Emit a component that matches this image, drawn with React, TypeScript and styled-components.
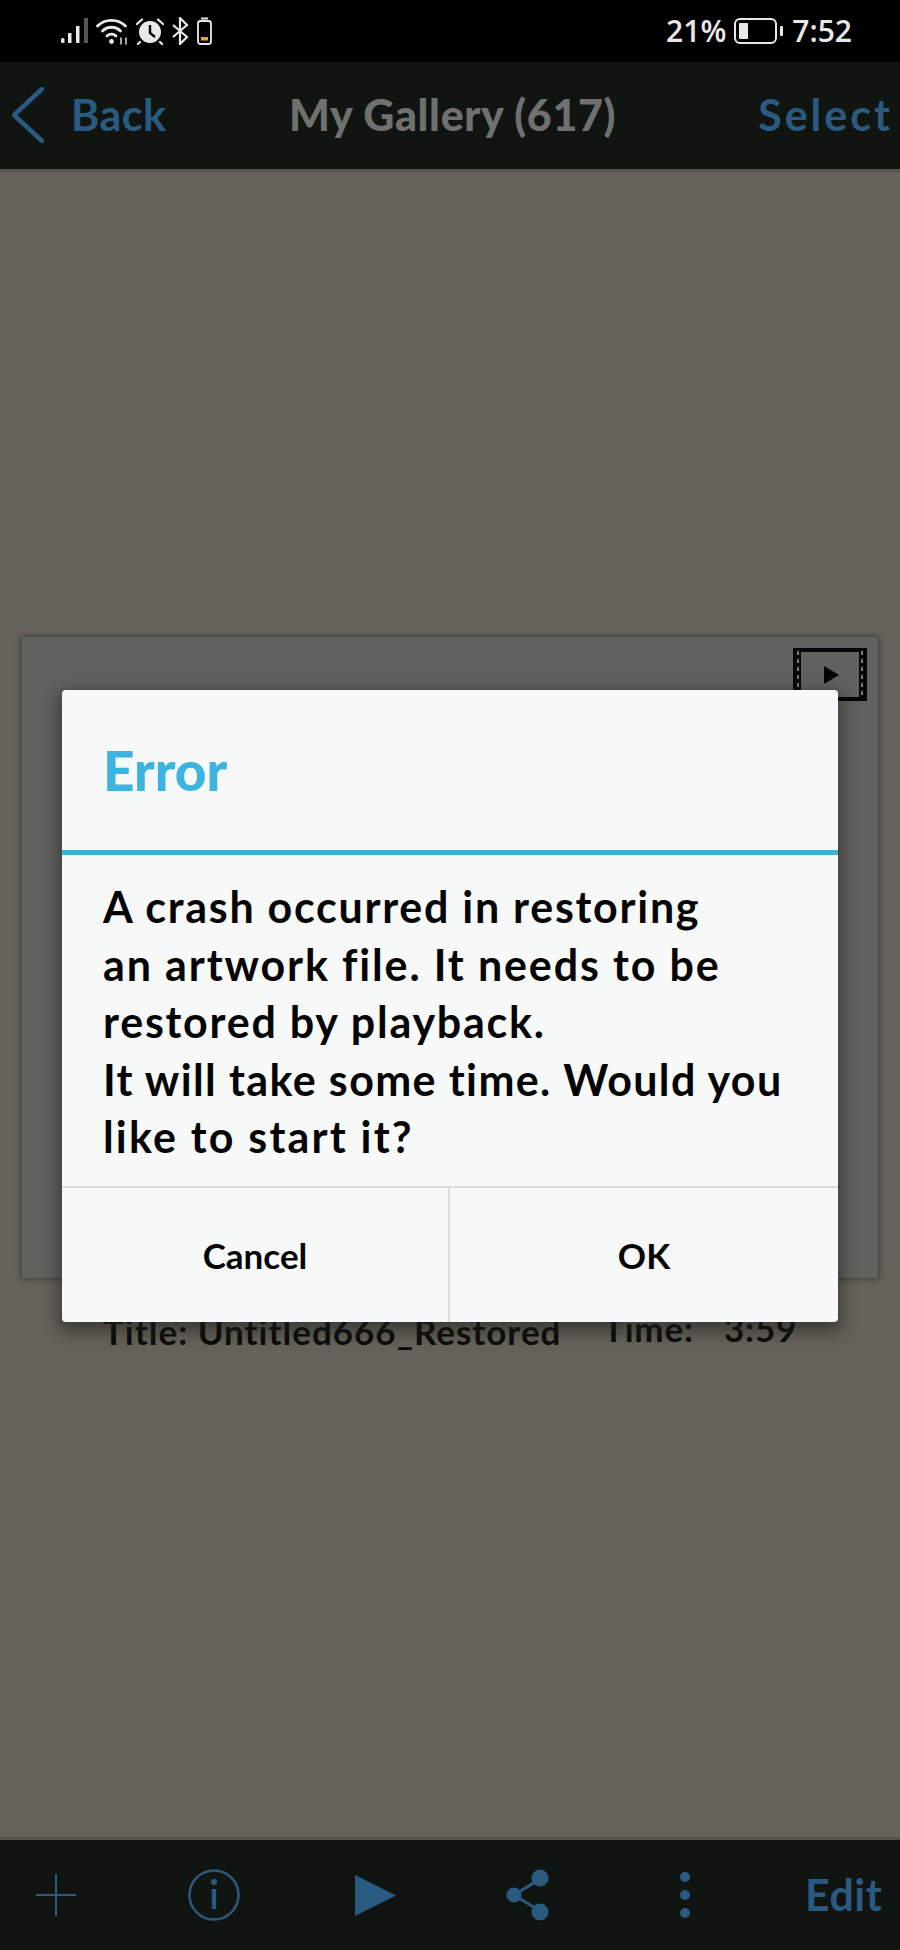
import React from "react";
import styled, { createGlobalStyle } from "styled-components";

const GlobalStyle = createGlobalStyle`
  html, body {
    margin: 0;
    padding: 0;
    background: #64625a;
    font-family: "Lato", "Noto Sans", sans-serif;
  }
`;

const Page = styled.div`
  width: 900px;
  height: 1950px;
  display: flex;
  flex-direction: column;
  overflow: hidden;
`;

const StatusBar = styled.div`
  height: 62px;
  flex: none;
  background: #000;
  display: flex;
  align-items: center;
  justify-content: space-between;
  padding: 0 48px 0 61px;
  box-sizing: border-box;
`;

const StatusGroup = styled.div`
  display: flex;
  align-items: center;
  gap: ${(p: { $gap: number }) => p.$gap}px;
`;

const StatusText = styled.span`
  font-family: "Open Sans", sans-serif;
  font-size: 30px;
  font-weight: 600;
  color: #e8e8e8;
  line-height: 32px;
`;

const TopBar = styled.div`
  height: 110px;
  flex: none;
  background: #111512;
  border-bottom: 3px solid #55554d;
  box-sizing: border-box;
  display: grid;
  grid-template-columns: 1fr auto 1fr;
  align-items: center;
  padding: 0 7px 2px 12px;
`;

const BackLink = styled.div`
  display: flex;
  align-items: center;
  gap: 27px;
`;

const BarLabel = styled.span<{ $spacing?: number }>`
  font-size: 43px;
  font-weight: 700;
  color: #2a5a80;
  letter-spacing: ${(p) => p.$spacing ?? 0.5}px;
  line-height: 50px;
`;

const BarTitle = styled.span`
  font-size: 43px;
  font-weight: 900;
  color: #6f716e;
  letter-spacing: 0.6px;
  line-height: 50px;
`;

const SelectLabel = styled(BarLabel)`
  justify-self: end;
`;

const Content = styled.div`
  flex: 1;
  position: relative;
  padding: 465px 22px 0;
  box-sizing: border-box;
`;

const Card = styled.div`
  height: 641px;
  background: #5f625d;
  box-shadow: 0 0 5px 1px #3a3a34;
  display: flex;
  justify-content: flex-end;
  align-items: flex-start;
  padding: 11px 11px 0 0;
  box-sizing: border-box;
`;

const Caption = styled.div`
  display: flex;
  align-items: flex-start;
  font-weight: 700;
  font-size: 35px;
  line-height: 42px;
  color: #0c0c0a;
  margin-top: 32px;
  padding-left: 81px;
`;

const CaptionTitle = styled.span`
  width: 500px;
  letter-spacing: 1px;
`;

const CaptionTime = styled.span<{ $width?: number }>`
  width: ${(p) => p.$width ?? 0}px;
  margin-top: -3px;
  letter-spacing: 0.8px;
`;

const Overlay = styled.div`
  position: absolute;
  inset: 0;
  display: flex;
  align-items: center;
  justify-content: center;
`;

const Dialog = styled.div`
  width: 776px;
  height: 632px;
  margin-top: 3px;
  background: #f7f8f8;
  border-radius: 4px;
  box-shadow: 0 6px 16px 4px rgba(30, 30, 26, 0.55);
  display: flex;
  flex-direction: column;
`;

const DialogHeader = styled.div`
  height: 165px;
  flex: none;
  display: flex;
  align-items: center;
  padding-left: 41px;
  box-sizing: border-box;
  border-bottom: 5px solid #3fb1d8;
`;

const DialogTitle = styled.h2`
  margin: 0;
  font-size: 55px;
  font-weight: 900;
  color: #3db4e0;
`;

const DialogBody = styled.div`
  flex: 1;
  padding: 23px 0 0 41px;
  box-sizing: border-box;
  font-size: 43px;
  font-weight: 700;
  line-height: 57.5px;
  color: #050505;
`;

const BodyLine = styled.div<{ $spacing: number }>`
  white-space: nowrap;
  letter-spacing: ${(p) => p.$spacing}px;
`;

const DialogFooter = styled.div`
  height: 136px;
  flex: none;
  display: grid;
  grid-template-columns: 388px 1fr;
  border-top: 2px solid #dcdcdc;
  box-sizing: border-box;
`;

const FooterButton = styled.div<{ $divider?: boolean }>`
  display: flex;
  align-items: center;
  justify-content: center;
  font-size: 35px;
  font-weight: 700;
  color: #050505;
  ${(p) => (p.$divider ? "border-right: 2px solid #dcdcdc;" : "")}
`;

const BottomBar = styled.div`
  height: 113px;
  flex: none;
  background: #111512;
  border-top: 3px solid #55554d;
  box-sizing: border-box;
  display: grid;
  grid-template-columns: 152px 167px 151px 174px 125px auto;
  align-items: center;
  justify-items: start;
  padding-left: 36px;
`;

const BLUE = "#2a5a80";

const Signal = () => (
  <svg width="27" height="26" viewBox="0 0 27 26">
    <rect x="0" y="20" width="3.5" height="5" rx="1.5" fill="#e8e8e8" />
    <rect x="7" y="15" width="3.5" height="10" fill="#e8e8e8" />
    <rect x="15" y="8" width="3.5" height="17" fill="#e8e8e8" />
    <rect x="23" y="0" width="4" height="25" fill="#555" />
  </svg>
);

const Wifi = () => (
  <svg width="32" height="27" viewBox="0 0 32 27" fill="none" stroke="#e8e8e8" strokeWidth="2.8" strokeLinecap="round">
    <path d="M1.5 8 C9 0.5 22 0.5 29.5 8" />
    <path d="M6.5 13 C11.5 8 19.5 8 24.5 13" />
    <path d="M11 18 C13.5 15.5 17.5 15.5 20 18" />
    <circle cx="15.5" cy="23.5" r="2.4" fill="#e8e8e8" stroke="none" />
    <path d="M25 20 V26 M30 20 V26" strokeWidth="1.4" />
  </svg>
);

const Alarm = () => (
  <svg width="28" height="27" viewBox="0 0 28 27">
    <circle cx="14" cy="14" r="11" fill="#e8e8e8" />
    <path d="M14 7 V15 L19 19" fill="none" stroke="#000" strokeWidth="2.4" />
    <path d="M1 6 L6 1.5 M27 6 L22 1.5 M4 24 L2 26 M24 24 L26 26" stroke="#e8e8e8" strokeWidth="2.2" strokeLinecap="round" />
  </svg>
);

const Bluetooth = () => (
  <svg width="17" height="28" viewBox="0 0 17 28" fill="none" stroke="#e8e8e8" strokeWidth="2.2">
    <path d="M1 8 L15 20 L8 27 V1 L15 8 L1 20" />
  </svg>
);

const SmallBattery = () => (
  <svg width="15" height="28" viewBox="0 0 15 28">
    <rect x="4" y="0.5" width="7" height="2" fill="#e8e8e8" />
    <rect x="1" y="4" width="13" height="23" rx="2.5" fill="none" stroke="#e8e8e8" strokeWidth="1.8" />
    <rect x="4" y="20" width="7" height="3.5" fill="#e8a33c" />
  </svg>
);

const BigBattery = () => (
  <svg width="50" height="26" viewBox="0 0 50 26">
    <rect x="1" y="1" width="41" height="24" rx="5" fill="none" stroke="#e8e8e8" strokeWidth="2" />
    <rect x="5" y="5" width="9" height="16" rx="1" fill="#e8e8e8" />
    <rect x="46" y="8" width="3" height="10" rx="1" fill="#e8e8e8" />
  </svg>
);

const Chevron = () => (
  <svg width="32" height="56" viewBox="0 0 32 56" fill="none" stroke={BLUE} strokeWidth="4.5" strokeLinecap="round" strokeLinejoin="round">
    <path d="M30 2 L2 28 L30 54" />
  </svg>
);

const FilmIcon = () => (
  <svg width="74" height="53" viewBox="0 0 74 53">
    <rect x="2" y="2" width="70" height="49" fill="none" stroke="#050505" strokeWidth="4" />
    <path d="M5 3 V51 M69 3 V51" stroke="#050505" strokeWidth="6" />
    <path d="M5 3 V51 M69 3 V51" stroke="#777" strokeWidth="2" strokeDasharray="4 4" />
    <path d="M31 18 L46 27 L31 36 Z" fill="#050505" />
  </svg>
);

const PlusIcon = () => (
  <svg width="40" height="42" viewBox="0 0 40 42" stroke={BLUE} strokeWidth="2">
    <path d="M20 0 V42 M0 21 H40" />
  </svg>
);

const InfoIcon = () => (
  <svg width="52" height="52" viewBox="0 0 52 52">
    <circle cx="26" cy="26" r="24.5" fill="none" stroke={BLUE} strokeWidth="2.5" />
    <circle cx="26" cy="13" r="3" fill={BLUE} />
    <rect x="23.8" y="20" width="4.4" height="20" fill={BLUE} />
  </svg>
);

const PlayIcon = () => (
  <svg width="41" height="41" viewBox="0 0 41 41">
    <path d="M0 0 L41 20.5 L0 41 Z" fill={BLUE} />
  </svg>
);

const ShareIcon = () => (
  <svg width="43" height="52" viewBox="0 0 43 52" fill={BLUE}>
    <path d="M34 10 L8 26 L34 42" fill="none" stroke={BLUE} strokeWidth="3" />
    <circle cx="34" cy="9" r="8.5" />
    <circle cx="8" cy="26" r="7.5" />
    <circle cx="34" cy="43" r="8.5" />
  </svg>
);

const DotsIcon = () => (
  <svg width="10" height="46" viewBox="0 0 10 46" fill={BLUE}>
    <circle cx="5" cy="5" r="5" />
    <circle cx="5" cy="23" r="5" />
    <circle cx="5" cy="41" r="5" />
  </svg>
);

export default function App() {
  return (
    <Page>
      <GlobalStyle />
      <StatusBar>
        <StatusGroup $gap={8}>
          <Signal />
          <Wifi />
          <Alarm />
          <Bluetooth />
          <SmallBattery />
        </StatusGroup>
        <StatusGroup $gap={8}>
          <StatusText>21%</StatusText>
          <BigBattery />
          <StatusText>7:52</StatusText>
        </StatusGroup>
      </StatusBar>
      <TopBar>
        <BackLink>
          <Chevron />
          <BarLabel>Back</BarLabel>
        </BackLink>
        <BarTitle>My Gallery (617)</BarTitle>
        <SelectLabel $spacing={3}>Select</SelectLabel>
      </TopBar>
      <Content>
        <Card>
          <FilmIcon />
        </Card>
        <Caption>
          <CaptionTitle>Title: Untitled666_Restored</CaptionTitle>
          <CaptionTime $width={121}>Time:</CaptionTime>
          <CaptionTime>3:59</CaptionTime>
        </Caption>
        <Overlay>
          <Dialog>
            <DialogHeader>
              <DialogTitle>Error</DialogTitle>
            </DialogHeader>
            <DialogBody>
              <BodyLine $spacing={1.72}>A crash occurred in restoring</BodyLine>
              <BodyLine $spacing={1.85}>an artwork file. It needs to be</BodyLine>
              <BodyLine $spacing={1.75}>restored by playback.</BodyLine>
              <BodyLine $spacing={1.37}>It will take some time. Would you</BodyLine>
              <BodyLine $spacing={2.18}>like to start it?</BodyLine>
            </DialogBody>
            <DialogFooter>
              <FooterButton $divider>Cancel</FooterButton>
              <FooterButton>OK</FooterButton>
            </DialogFooter>
          </Dialog>
        </Overlay>
      </Content>
      <BottomBar>
        <PlusIcon />
        <InfoIcon />
        <PlayIcon />
        <ShareIcon />
        <DotsIcon />
        <BarLabel>Edit</BarLabel>
      </BottomBar>
    </Page>
  );
}
